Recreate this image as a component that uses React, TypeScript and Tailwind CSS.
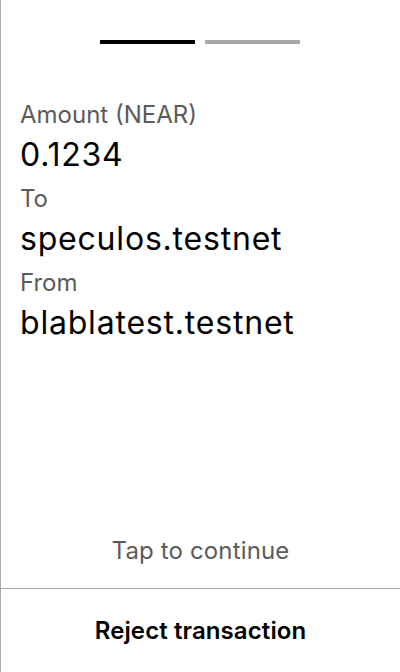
import React from 'react'

const fields = [
  { label: 'Amount (NEAR)', value: '0.1234' },
  { label: 'To', value: 'speculos.testnet' },
  { label: 'From', value: 'blablatest.testnet' },
]

export default function App() {
  return (
    <div
      className="w-[400px] h-[672px] bg-white border-l border-[#a8a8a8] flex flex-col overflow-hidden"
      style={{ fontFamily: 'Inter, "Noto Sans", sans-serif' }}
    >
      {/* Page indicator */}
      <div className="flex gap-[10px] pt-[40px] pl-[99px]">
        <div className="w-[95px] h-[4px] bg-black" />
        <div className="w-[95px] h-[4px] bg-[#a8a8a8]" />
      </div>

      {/* Fields */}
      <div className="flex flex-col pl-[19px] pt-[51px]">
        {fields.map((f) => (
          <div key={f.label} className="flex flex-col">
            <span className="text-[24px] leading-[40px] text-[#5b5b5b]">{f.label}</span>
            <span className="text-[32px] leading-[40px] mb-[4px] tracking-[0.8px] text-black">{f.value}</span>
          </div>
        ))}
      </div>

      <div className="flex-1" />

      <div className="text-center text-[24px] leading-[28px] tracking-[0.15px] text-[#5b5b5b] pb-[23px]">
        Tap to continue
      </div>

      <div className="h-[84px] border-t border-[#a8a8a8] flex items-center justify-center">
        <span className="text-[24px] font-semibold tracking-[0.1px] text-black">Reject transaction</span>
      </div>
    </div>
  )
}
